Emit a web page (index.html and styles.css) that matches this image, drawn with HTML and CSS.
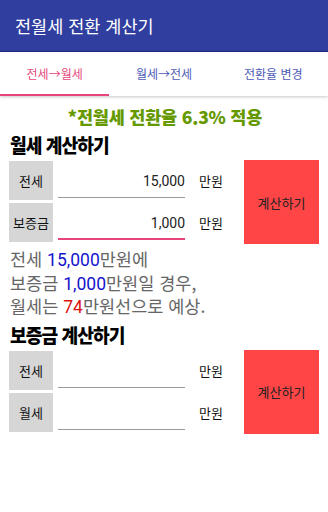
FILE: index.html
```html
<!DOCTYPE html>
<html lang="ko">
<head>
<meta charset="utf-8">
<title>전월세 전환 계산기</title>
<link rel="stylesheet" href="styles.css">
</head>
<body>
<header class="appbar">전월세 전환 계산기</header>
<nav class="tabs">
  <div class="tab active">전세→월세</div>
  <div class="tab">월세→전세</div>
  <div class="tab">전환율 변경</div>
</nav>
<main class="content">
  <div class="rate">*전월세 전환율 6.3% 적용</div>
  <h2 class="heading"><span class="heading-text">월세 계산하기</span></h2>
  <section class="calc">
    <div class="fields">
      <div class="row">
        <div class="label">전세</div>
        <div class="input">15,000</div>
        <div class="unit">만원</div>
      </div>
      <div class="row">
        <div class="label">보증금</div>
        <div class="input focused">1,000</div>
        <div class="unit">만원</div>
      </div>
    </div>
    <div class="button">계산하기</div>
  </section>
  <p class="result">전세 <span class="blue">15,000</span>만원에<br>보증금 <span class="blue">1,000</span>만원일 경우,<br>월세는 <span class="red">74</span>만원선으로 예상.</p>
  <h2 class="heading second"><span class="heading-text">보증금 계산하기</span></h2>
  <section class="calc">
    <div class="fields">
      <div class="row">
        <div class="label">전세</div>
        <div class="input"></div>
        <div class="unit">만원</div>
      </div>
      <div class="row">
        <div class="label">월세</div>
        <div class="input"></div>
        <div class="unit">만원</div>
      </div>
    </div>
    <div class="button">계산하기</div>
  </section>
</main>
</body>
</html>
```
FILE: styles.css
```css
html, body {
  margin: 0;
  padding: 0;
  background: #ffffff;
  font-family: "Noto Sans CJK KR", "Noto Sans", Roboto, sans-serif;
}
.appbar {
  height: 51px;
  background: #303f9f;
  border-bottom: 1px solid #1e2a80;
  color: #ffffff;
  font-size: 17.5px;
  line-height: 51px;
  padding-left: 15px;
  box-sizing: content-box;
}
.tabs {
  display: flex;
  height: 44px;
  background: #ffffff;
  box-shadow: 0 1px 3px rgba(0,0,0,0.22);
  position: relative;
}
.tab {
  flex: 1;
  display: flex;
  align-items: center;
  justify-content: center;
  font-size: 12px;
  color: #4c5ab5;
  box-sizing: border-box;
  padding-bottom: 2px;
}
.tab.active {
  color: #e4487c;
  border-bottom: 2px solid #e8457a;
  padding-bottom: 0;
}
.content {
  padding: 0 9px;
}
.rate {
  margin-top: 10px;
  height: 22px;
  line-height: 22px;
  text-align: center;
  font-size: 17.5px;
  font-weight: 900;
  letter-spacing: -0.2px;
  color: #669900;
  padding-left: 2px;
}
.heading {
  margin: 5px 0 0 1px;
  height: 24px;
  line-height: 24px;
  font-size: 19.5px;
  font-weight: 900;
  color: #000000;
}
.heading-text {
  display: inline-block;
  letter-spacing: -1px;
  transform: scaleX(0.93);
  transform-origin: left center;
  white-space: nowrap;
}
.heading.second {
  margin-top: 4px;
}
.calc {
  display: flex;
  margin-top: 3px;
  height: 84px;
}
.fields {
  display: flex;
  flex-direction: column;
  gap: 3px;
  margin-top: 1px;
}
.row {
  display: flex;
  align-items: flex-start;
  height: 39px;
}
.label {
  width: 44px;
  height: 39px;
  background: #d6d6d6;
  display: flex;
  align-items: center;
  justify-content: center;
  font-size: 13px;
  color: #111111;
}
.input {
  width: 127px;
  height: 32px;
  margin-left: 5px;
  border-bottom: 1px solid #9a9a9a;
  display: flex;
  align-items: center;
  justify-content: flex-end;
  font-family: Roboto, "Noto Sans CJK KR", sans-serif;
  font-size: 14px;
  color: #222222;
  padding-top: 4px;
  box-sizing: content-box;
}
.input.focused {
  border-bottom: 2px solid #e8457a;
  height: 31px;
}
.unit {
  margin-left: 14px;
  height: 39px;
  display: flex;
  align-items: center;
  font-size: 13px;
  color: #111111;
}
.button {
  margin-left: auto;
  margin-right: 0;
  width: 75px;
  height: 84px;
  background: #ff4545;
  display: flex;
  align-items: center;
  justify-content: center;
  font-size: 13px;
  color: #222222;
}
.result {
  margin: 4px 0 0 1px;
  font-size: 17.5px;
  line-height: 21.5px;
  color: #666666;
}
.result .blue {
  color: #1414cc;
  font-family: Roboto, "Noto Sans CJK KR", sans-serif;
}
.result .red {
  color: #dd1111;
  font-family: Roboto, "Noto Sans CJK KR", sans-serif;
}
```
